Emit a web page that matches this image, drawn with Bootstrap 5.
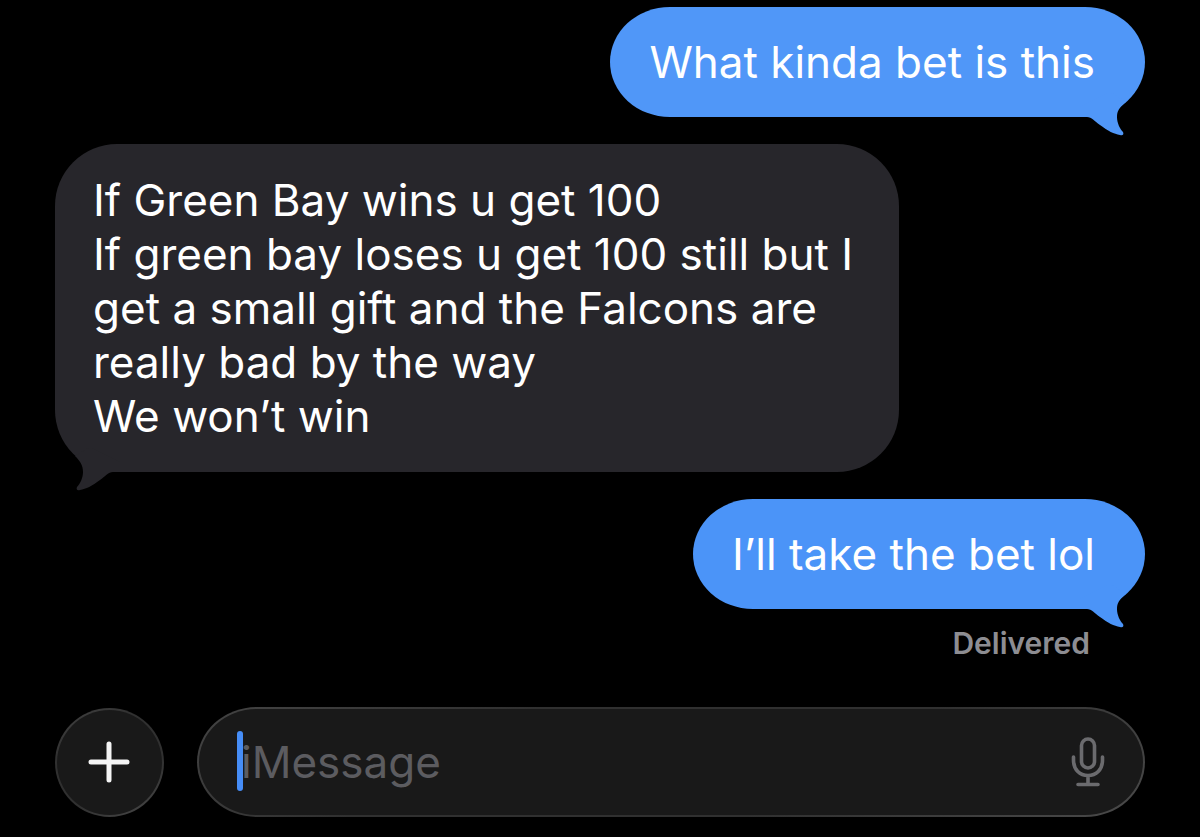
<!DOCTYPE html>
<html lang="en">
<head>
<meta charset="utf-8">
<meta name="viewport" content="width=device-width, initial-scale=1">
<title>Messages</title>
<link href="https://cdn.jsdelivr.net/npm/bootstrap@5.3.0/dist/css/bootstrap.min.css" rel="stylesheet">
<style>
body { background: #000; color: #fff; font-family: Inter, "Liberation Sans", sans-serif; }
.thread { padding: 7px 55px 20px; }
.messages { gap: 27px; }
.bubble { font-size: 44px; line-height: 54px; border-radius: 60px / 55px; padding: 28px 50px 28px 39px; max-width: 844px; }
.bubble-sent { background: #4b94f8; color: #fff; }
.bubble-first { background: #5097f8; }
.bubble-received { background: #27262b; color: #fff; border-radius: 62px; padding: 29px 38px; }
.tail { width: 65px; height: 50px; bottom: -20px; }
.bubble-sent .tail { right: 0; fill: #4b94f8; }
.bubble-first .tail { fill: #5097f8; }
.bubble-received .tail { left: 0; fill: #27262b; }
.status { font-size: 30px; line-height: 36px; font-weight: 600; color: #8d8d92; padding: 16px 55px 0 0; }
.composer { gap: 33px; margin-top: 46px; }
.round-btn { width: 109px; height: 109px; }
.round-btn, .field { background: linear-gradient(#191919, #191919) padding-box, linear-gradient(150deg, #444, #303030 30%, #303030 65%, #4a4a4a) border-box; border: 2px solid transparent; }
.field { height: 110px; border-radius: 60px / 55px; padding: 0 36px 0 42px; }
.field input { font-size: 44px; line-height: 54px; color: #fff; caret-color: #4b94f8; }
.field input::placeholder { color: #5c5c60; opacity: 1; }
.cursor { width: 6px; height: 60px; left: 38px; top: 22px; border-radius: 3px; background: #468df6; }
</style>
</head>
<body>
<main class="container-fluid thread">
  <div class="messages d-flex flex-column">
    <div class="bubble bubble-sent bubble-first position-relative align-self-end">What kinda bet is this
      <svg class="tail position-absolute" viewBox="0 0 65 50" aria-hidden="true"><path d="M0 30H7C12 30 14 34 20 38C28 44 34 47 40 48C43 49 44 47 43 45C40 42 37 36 37 30C37 24 39 21 46 15L30 5L0 20Z"/></svg>
    </div>
    <div class="bubble bubble-received position-relative align-self-start">If Green Bay wins u get 100<br>If green bay loses u get 100 still but I get a small gift and the Falcons are really bad by the way<br>We won’t win
      <svg class="tail position-absolute" viewBox="0 0 65 50" aria-hidden="true"><path d="M65 30H58C53 30 51 34 45 38C37 44 31 47 25 48C22 49 21 47 22 45C25 42 28 36 28 30C28 23 25 19 20 14L35 5L65 20Z"/></svg>
    </div>
    <div class="bubble bubble-sent position-relative align-self-end">I’ll take the bet lol
      <svg class="tail position-absolute" viewBox="0 0 65 50" aria-hidden="true"><path d="M0 30H7C12 30 14 34 20 38C28 44 34 47 40 48C43 49 44 47 43 45C40 42 37 36 37 30C37 24 39 21 46 15L30 5L0 20Z"/></svg>
    </div>
  </div>
  <div class="status text-end">Delivered</div>
  <form class="composer d-flex align-items-center">
    <button type="button" class="round-btn btn rounded-circle p-0 flex-shrink-0 d-flex align-items-center justify-content-center" aria-label="Add attachment">
      <svg width="43" height="43" viewBox="0 0 43 43" stroke="#f4f4f4" stroke-width="5" stroke-linecap="round" aria-hidden="true"><path d="M21 3V39M3 21H39"/></svg>
    </button>
    <div class="field position-relative d-flex align-items-center flex-grow-1">
      <input type="text" class="form-control border-0 bg-transparent shadow-none p-0" placeholder="iMessage" aria-label="iMessage">
      <span class="cursor position-absolute" aria-hidden="true"></span>
      <button type="button" class="btn border-0 p-0 d-flex flex-shrink-0" aria-label="Dictate">
        <svg width="36" height="50" viewBox="0 0 36 50" fill="none" stroke="#6b6b6e" stroke-width="3.6" stroke-linecap="round" aria-hidden="true"><rect x="10.500" y="2" width="13" height="29" rx="6.500"/><path d="M2.500 20V23C2.500 33 9 38.500 17 38.500S31.500 33 31.500 23V20M17 38.500V47.500M7 47.500H27"/></svg>
      </button>
    </div>
  </form>
</main>
<script src="https://cdn.jsdelivr.net/npm/bootstrap@5.3.0/dist/js/bootstrap.bundle.min.js"></script>
</body>
</html>
